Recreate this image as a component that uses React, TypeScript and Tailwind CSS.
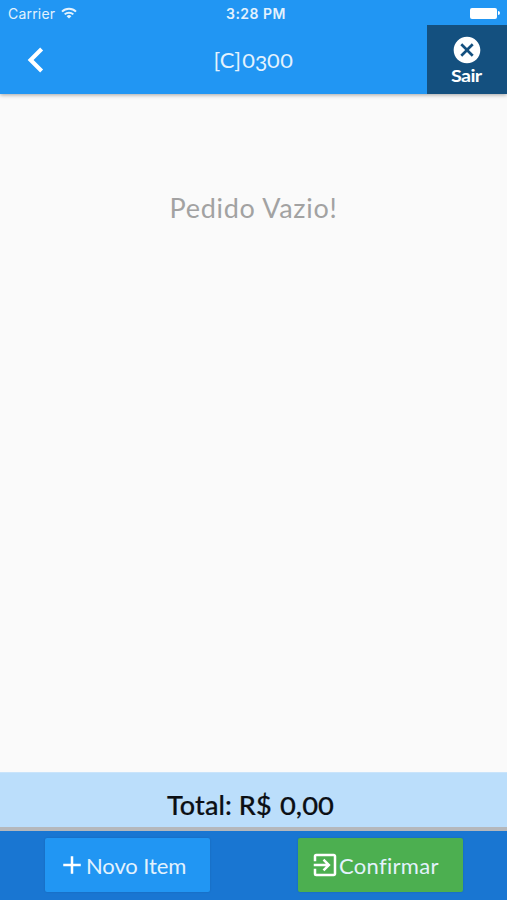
import { MdAdd, MdCancel, MdChevronLeft, MdExitToApp } from "react-icons/md";

const StatusBar = () => {
  return (
    <div className="grid h-[25px] grid-cols-3 items-center pl-2 pr-[7px] pt-[3px] font-['Inter',sans-serif] text-[#e3f2fd]">
      <div className="flex items-center gap-[6px]">
        <span className="text-[14px] leading-none tracking-[0.2px]">Carrier</span>
        <svg width="16" height="12" viewBox="0 0 16 12" fill="none" stroke="currentColor" strokeWidth="2" className="-mt-[2px]">
          <path d="M1 4.6a10 10 0 0 1 14 0" />
          <path d="M3.7 7.4a6.1 6.1 0 0 1 8.6 0" />
          <path d="M8 11.6L5.6 9.3a3.4 3.4 0 0 1 4.8 0z" fill="currentColor" stroke="none" />
        </svg>
      </div>
      <span className="whitespace-nowrap pl-[4px] text-center text-[14px] font-semibold leading-none tracking-[0.5px]">3:28 PM</span>
      <div className="-mt-[2px] flex items-center justify-end gap-px text-white">
        <div className="h-[11px] w-[27px] rounded-[2px] bg-current" />
        <div className="h-[4px] w-[2px] rounded-r-full bg-current" />
      </div>
    </div>
  );
};

const Header = () => {
  return (
    <header className="relative h-[94px] bg-[#2196f3] shadow-[0_1px_4px_rgba(0,0,0,0.35)]">
      <StatusBar />
      <div className="grid h-[69px] grid-cols-[80px_1fr_80px]">
        <button className="flex items-center pl-[11px] text-white">
          <MdChevronLeft size={50} />
        </button>
        <h1 className="flex items-baseline justify-center pt-[20px] text-[22px] font-normal leading-[30px] text-[#e3f2fd]">
          <span className="tracking-[-0.1px]">[C]</span>
          {/* Old-style figures: zeros at x-height, the three hangs below */}
          <span className="inline-block origin-left scale-x-[1.15] pl-[1px] text-[19px]">0</span>
          <span className="relative top-[3px] pl-[2px] text-[21px]">3</span>
          <span className="inline-block origin-left scale-x-[1.15] pr-[3px] text-[19px] tracking-[0.6px]">00</span>
        </h1>
        <button className="flex flex-col items-center bg-[#14507f] pt-[9px] pr-px text-white">
          <MdCancel size={32} />
          <span className="mt-[1px] inline-block scale-x-[1.16] text-[17px] font-bold leading-[18px] tracking-[-0.5px]">Sair</span>
        </button>
      </div>
    </header>
  );
};

const Footer = () => {
  return (
    <footer>
      <div className="flex h-[59px] items-baseline border-b-[4px] border-t border-b-[#b5b8bc] border-t-[#c9e4fb] bg-[#bbdefb] pl-[167px] pt-[14px] text-[27px] font-medium leading-[36px] text-[#0b0f14]">
        <span className="tracking-[0.1px] [-webkit-text-stroke:0.2px_currentColor]">Total: R$</span>
        <span className="ml-[8px] inline-block origin-left scale-x-[1.14] text-[24px] [-webkit-text-stroke:0.2px_currentColor]">0,00</span>
      </div>
      <div className="flex h-[69px] gap-[88px] bg-[#1976d2] pl-[45px] pt-[7px] text-[22px] text-[#e3f2fd]">
        <button className="flex h-[54px] w-[165px] items-center rounded-[2px] bg-[#2196f3] pl-[12px] shadow-[0_0_2px_rgba(0,0,0,0.15)]">
          <MdAdd size={30} className="text-white" />
          <span className="-ml-px tracking-[-0.1px]">Novo Item</span>
        </button>
        <button className="flex h-[54px] w-[165px] items-center rounded-[2px] bg-[#4caf50] pl-[12px] shadow-[0_0_2px_rgba(0,0,0,0.15)]">
          <MdExitToApp size={30} className="text-white" />
          <span className="-ml-px tracking-[0.3px]">Confirmar</span>
        </button>
      </div>
    </footer>
  );
};

export default function App() {
  return (
    <div className="flex h-[900px] w-[507px] flex-col overflow-hidden bg-[#fafafa] font-['Lato',sans-serif]">
      <Header />
      <main className="flex-1 pt-[94px] text-center">
        <p className="text-[27px] leading-[40px] tracking-[0.7px] text-[#a2a2a2]">Pedido Vazio!</p>
      </main>
      <Footer />
    </div>
  );
}
